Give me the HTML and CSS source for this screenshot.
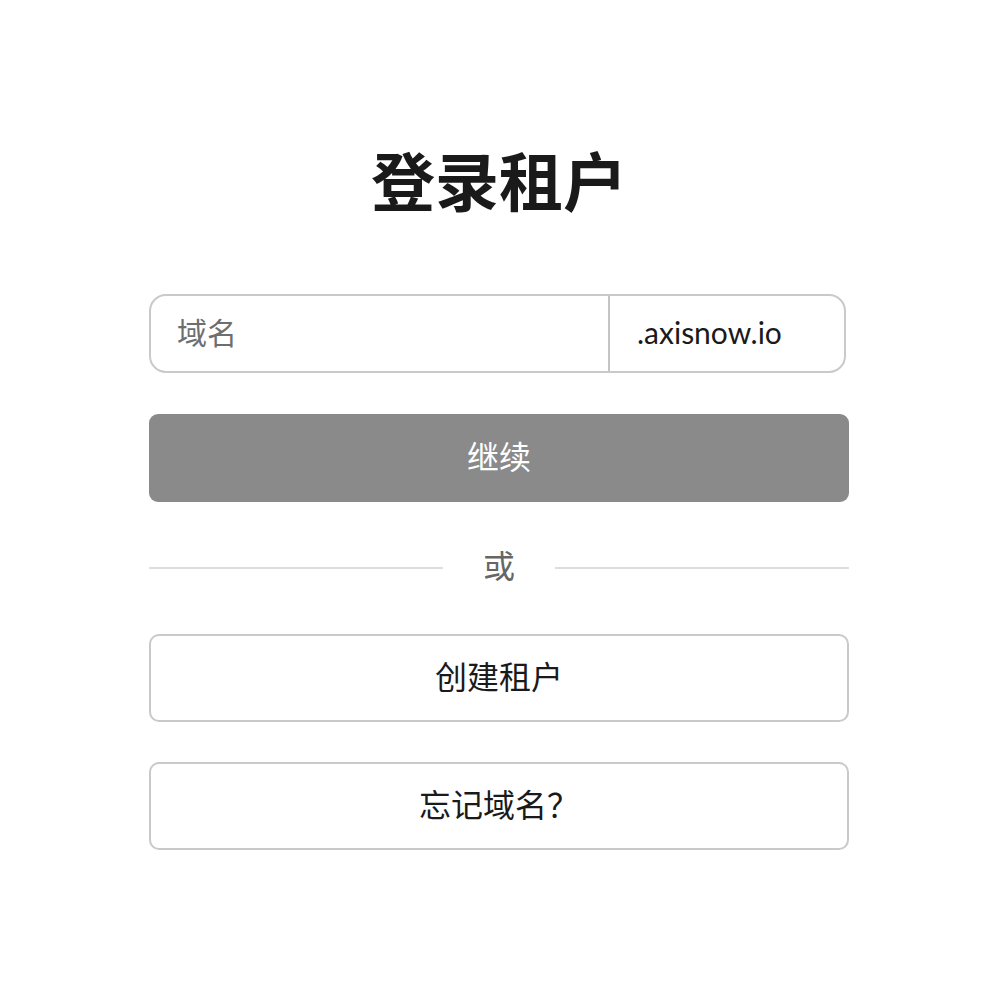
FILE: index.html
```html
<!DOCTYPE html>
<html lang="zh-CN">
<head>
<meta charset="utf-8">
<title>登录租户</title>
<link rel="stylesheet" href="styles.css">
</head>
<body>
<main class="page">
  <div class="panel">
    <h1 class="title">登录租户</h1>
    <div class="domain-field">
      <input class="domain-input" type="text" placeholder="域名">
      <span class="domain-suffix">.axisnow.io</span>
    </div>
    <button class="btn btn-primary" type="button">继续</button>
    <div class="divider">
      <span class="divider-line"></span>
      <span class="divider-text">或</span>
      <span class="divider-line"></span>
    </div>
    <button class="btn btn-outline" type="button">创建租户</button>
    <button class="btn btn-outline btn-last" type="button">忘记域名？</button>
  </div>
</main>
</body>
</html>
```

FILE: styles.css
```css
* { box-sizing: border-box; }

html, body {
  margin: 0;
  padding: 0;
  background: #ffffff;
}

body {
  font-family: Lato, "Noto Sans CJK SC", sans-serif;
  color: #1a1a1a;
}

.page {
  display: flex;
  justify-content: center;
  padding: 140px 7px 0 0;
}

.panel {
  width: 700px;
  display: flex;
  flex-direction: column;
}

.title {
  margin: 0;
  font-family: "Noto Sans CJK SC", sans-serif;
  font-size: 64px;
  font-weight: 700;
  line-height: 77px;
  text-align: center;
  color: #1a1a1a;
}

.domain-field {
  margin-top: 77px;
  width: 697px;
  height: 79px;
  display: flex;
  border: 2px solid #c9c9c9;
  border-radius: 17px;
  overflow: hidden;
}

.domain-input {
  flex: 1;
  min-width: 0;
  border: none;
  outline: none;
  padding: 0 0 4px 26px;
  font-family: Lato, "Noto Sans CJK SC", sans-serif;
  font-size: 30px;
  color: #1a1a1a;
  background: transparent;
}

.domain-input::placeholder {
  color: #6e6e6e;
}

.domain-suffix {
  width: 236px;
  display: flex;
  align-items: center;
  padding: 0 0 4px 27px;
  border-left: 2px solid #c4c4c4;
  font-size: 30px;
  color: #1a1a1a;
}

.btn {
  width: 700px;
  height: 88px;
  font-family: Lato, "Noto Sans CJK SC", sans-serif;
  font-size: 32px;
  cursor: pointer;
  padding: 0 0 6px 0;
}

.btn-primary {
  margin-top: 41px;
  border: none;
  border-radius: 9px;
  background: #8a8a8b;
  color: #ffffff;
}

.divider {
  margin-top: 46px;
  height: 40px;
  display: flex;
  align-items: center;
}

.divider-line {
  flex: 1;
  height: 2px;
  background: #dddddd;
}

.divider-text {
  width: 112px;
  text-align: center;
  font-size: 32px;
  color: #666666;
  line-height: 40px;
  padding-bottom: 4px;
}

.btn-outline {
  margin-top: 46px;
  border: 2px solid #c9c9c9;
  border-radius: 10px;
  background: #ffffff;
  color: #1a1a1a;
}

.btn-last {
  margin-top: 40px;
}
```
